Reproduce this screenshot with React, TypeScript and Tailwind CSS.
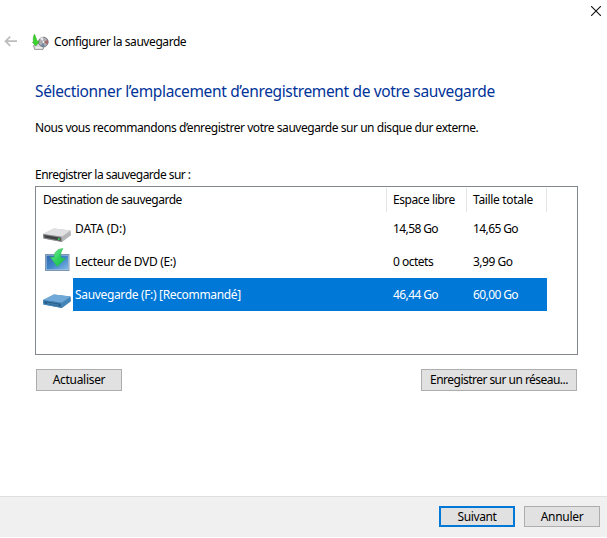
import type { ReactNode } from "react";

function BackArrow() {
  return (
    <svg width="14" height="12" viewBox="0 0 14 12" fill="none" stroke="#bcbcbc" strokeWidth="1.7">
      <path d="M6.2 .6 L1.5 5.2 L6.2 9.8 M1.5 5.2 H13" />
    </svg>
  );
}

function BackupIcon() {
  return (
    <svg width="17" height="17" viewBox="0 0 17 17">
      <path d="M1.5 11.5 L6 9 H14 L11 15.4 H2.6 Z" fill="#dadada" stroke="#858585" strokeWidth=".8" />
      <circle cx="11.4" cy="8" r="4.8" fill="#aeb0b5" stroke="#707075" strokeWidth=".9" />
      <path d="M11.4 8 L8 4.5 A4.8 4.8 0 0 1 11 3.3 Z" fill="#eee6ef" />
      <path d="M11.4 8 L15.6 6 A4.8 4.8 0 0 1 15.4 10.3 Z" fill="#a5656b" />
      <path d="M11.4 8 L9 12 A4.8 4.8 0 0 0 12.5 12.6 Z" fill="#6986a8" />
      <circle cx="11.4" cy="8" r="1.4" fill="#f6f6f6" stroke="#777" strokeWidth=".5" />
      <path d="M2.6 0.2 C1 2.5 1 5.5 1.6 8 L.4 8.2 L3.8 12 L7.2 7.2 L5.2 7.2 C4.2 4.8 3.6 2.5 2.6 .2Z" fill="#3bd52d" stroke="#20a51b" strokeWidth=".5" />
      <path d="M3.6 13 H10 V14.6 H3.2Z" fill="#efefef" />
    </svg>
  );
}

function DriveIcon({ blue = false }: { blue?: boolean }) {
  return (
    <svg width="28" height="16" viewBox="0 0 28 16">
      <path d="M0 7 L11 1.5 L27.6 3.6 L28 8.3 L19 15 L.4 11.4 Z" fill={blue ? "#4585b8" : "#b5b6b8"} />
      <path d="M0 7 L11 1.5 L27.6 3.6 L18.6 9.8 Z" fill={blue ? "#70a9d8" : "#e1e1e3"} />
      <path d="M0 7 L18.6 9.8 L19 15 L.4 11.4 Z" fill={blue ? "#4384b8" : "#858689"} />
      <path d="M1.2 8.1 L17.5 10.7 L17.8 13.7 L1.5 10.6 Z" fill={blue ? "#265c86" : "#414244"} />
      {blue ? (
        <path d="M4 9.5 L15.6 11.3 V12.8 L4 10.7Z" fill="#3e7ba5" />
      ) : (
        <path d="M14.8 11.3 L16.8 11.6 V13 L14.8 12.7Z" fill="#2bd957" />
      )}
    </svg>
  );
}

function DvdIcon() {
  return (
    <svg width="25" height="24" viewBox="0 0 25 24">
      <defs>
        <linearGradient id="screen" x1="0" y1="0" x2="1" y2="1">
          <stop stopColor="#2f66ad" />
          <stop offset=".5" stopColor="#4185c8" />
          <stop offset="1" stopColor="#82b9e8" />
        </linearGradient>
        <linearGradient id="arrow" x1="0" y1="0" x2="1" y2="1">
          <stop stopColor="#8df2a2" />
          <stop offset=".5" stopColor="#31d463" />
          <stop offset="1" stopColor="#16b946" />
        </linearGradient>
      </defs>
      <rect x=".5" y="6.5" width="23.5" height="16" fill="#b9cde0" stroke="#7c98b5" />
      <rect x="1.5" y="7.5" width="21.5" height="14" fill="url(#screen)" />
      <path d="M18 .7 C12.5 .7 9.3 4 9 9.4 L5.4 9 L12.2 18.5 L20.4 10.6 L15.9 9.8 C15.3 6 16 3 18 .7Z" fill="url(#arrow)" stroke="#28bd50" strokeWidth=".6" />
    </svg>
  );
}

type Row = {
  icon: ReactNode;
  name: string;
  free: string;
  total: string;
  nameTracking: string;
  sizeTracking: string;
  selected?: boolean;
};

const rows: Row[] = [
  { icon: <DriveIcon />, name: "DATA (D:)", free: "14,58 Go", total: "14,65 Go", nameTracking: "tracking-[-0.05px]", sizeTracking: "tracking-[-0.6px]" },
  { icon: <DvdIcon />, name: "Lecteur de DVD (E:)", free: "0 octets", total: "3,99 Go", nameTracking: "tracking-[-0.35px]", sizeTracking: "tracking-[-0.5px]" },
  { icon: <DriveIcon blue />, name: "Sauvegarde (F:) [Recommandé]", free: "46,44 Go", total: "60,00 Go", nameTracking: "tracking-[-0.34px]", sizeTracking: "tracking-[-0.6px]", selected: true },
];

function Button({ children, className }: { children: ReactNode; className: string }) {
  return (
    <button className={`flex items-center justify-center whitespace-nowrap bg-[#e1e1e1] ${className}`}>
      <span>{children}</span>
    </button>
  );
}

export default function App() {
  return (
    <div className="flex h-[538px] w-[607px] flex-col overflow-hidden bg-white font-['Noto_Sans','Open_Sans',sans-serif] text-[12px] leading-4 whitespace-nowrap text-black">
      <div className="flex h-6 shrink-0 items-start justify-end pt-[6px] pr-[6px]">
        <svg width="10" height="10" viewBox="0 0 10 10" stroke="#111" strokeWidth="1.1">
          <path d="M0 0 L10 10 M10 0 L0 10" />
        </svg>
      </div>
      <header className="flex h-9 shrink-0 items-center pl-[4px]">
        <BackArrow />
        <div className="ml-[14px]"><BackupIcon /></div>
        <span className="ml-[5px] tracking-[-0.43px]">Configurer la sauvegarde</span>
      </header>
      <main className="flex h-[436px] shrink-0 flex-col pr-[29px] pl-[35px]">
        <h1 className="mt-[19px] h-6 text-[15.5px] leading-6 tracking-[-0.35px] text-[#003399]">
          Sélectionner l’emplacement d’enregistrement de votre sauvegarde
        </h1>
        <p className="mt-[17px] tracking-[-0.45px]">Nous vous recommandons d’enregistrer votre sauvegarde sur un disque dur externe.</p>
        <p className="mt-[31px] tracking-[-0.53px]">Enregistrer la sauvegarde sur :</p>
        <div className="mt-[3px] h-[169px] border border-[#828790]">
          <div className="flex h-[25px] w-[511px] pt-px">
            <div className="flex w-[351px] items-center border-r border-[#e5e5e5] pl-[7px] tracking-[-0.49px]">Destination de sauvegarde</div>
            <div className="flex w-20 items-center border-r border-[#e5e5e5] pl-[6px] tracking-[-0.45px]">Espace libre</div>
            <div className="flex w-20 items-center border-r border-[#e5e5e5] pl-[6px] tracking-[-0.33px]">Taille totale</div>
          </div>
          {rows.map((row) => (
            <div key={row.name} className="flex h-[33px] w-[511px]">
              <div className="flex w-[37px] items-center justify-center pl-[5px]">
                <div className={row.name.startsWith("Lecteur") ? "-mt-1" : "mt-[12px]"}>{row.icon}</div>
              </div>
              <div className={`flex flex-1 items-center ${row.selected ? "bg-[#0078d7] text-white" : ""}`}>
                <span className={`w-[318px] pl-[2px] ${row.nameTracking}`}>{row.name}</span>
                <span className={`w-20 pl-[2px] ${row.sizeTracking}`}>{row.free}</span>
                <span className={`pl-[2px] ${row.sizeTracking}`}>{row.total}</span>
              </div>
            </div>
          ))}
        </div>
        <div className="mt-[14px] flex justify-between pr-px pl-px">
          <Button className="h-[22px] w-[86px] border border-[#adadad] tracking-[-0.3px]">Actualiser</Button>
          <Button className="h-[22px] w-[156px] border border-[#adadad] tracking-[-0.53px]">Enregistrer sur un réseau...</Button>
        </div>
      </main>
      <footer className="flex h-[41px] shrink-0 justify-end gap-[9px] border-t border-[#dfdfdf] bg-[#f0f0f0] pt-[9px] pr-[7px]">
        <Button className="h-[21px] w-[76px] border-2 border-[#0078d7] tracking-[-0.4px]">Suivant</Button>
        <Button className="h-[21px] w-[76px] border border-[#adadad] tracking-[-0.3px]">Annuler</Button>
      </footer>
    </div>
  );
}
